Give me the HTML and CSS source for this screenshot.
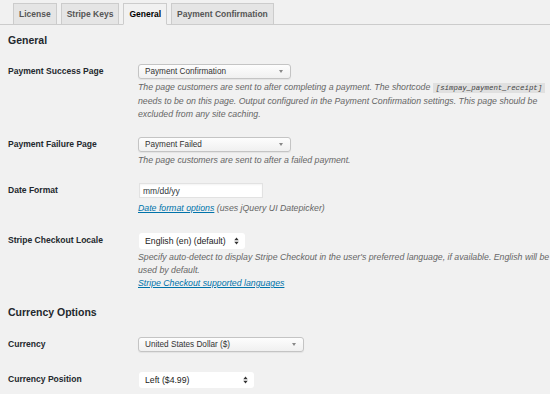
FILE: index.html
```html
<!DOCTYPE html>
<html lang="en">
<head>
    <meta charset="UTF-8">
    <meta name="viewport" content="width=device-width, initial-scale=1.0">
    <title>Settings - General</title>
    <link rel="stylesheet" href="styles.css">
</head>
<body>
    <div class="wrap">
        <nav class="tabs">
            <a class="tab" href="#">License</a>
            <a class="tab" href="#">Stripe Keys</a>
            <a class="tab tab-active" href="#">General</a>
            <a class="tab" href="#">Payment Confirmation</a>
        </nav>

        <h2 class="section-title">General</h2>

        <div class="form-table">
            <div class="row">
                <div class="label">Payment Success Page</div>
                <div class="field">
                    <div class="fancy-select w-page">
                        <span>Payment Confirmation</span>
                        <span class="caret"></span>
                    </div>
                    <p class="desc">The page customers are sent to after completing a payment. The shortcode <code>[simpay_payment_receipt]</code> needs to be on this page. Output configured in the Payment Confirmation settings. This page should be excluded from any site caching.</p>
                </div>
            </div>

            <div class="row">
                <div class="label">Payment Failure Page</div>
                <div class="field">
                    <div class="fancy-select w-page">
                        <span>Payment Failed</span>
                        <span class="caret"></span>
                    </div>
                    <p class="desc">The page customers are sent to after a failed payment.</p>
                </div>
            </div>

            <div class="row">
                <div class="label">Date Format</div>
                <div class="field">
                    <input class="text-input" type="text" value="mm/dd/yy">
                    <p class="desc desc-link"><a href="#">Date format options</a> (uses jQuery UI Datepicker)</p>
                </div>
            </div>

            <div class="row row-native">
                <div class="label">Stripe Checkout Locale</div>
                <div class="field">
                    <div class="native-select w-locale">
                        <span>English (en) (default)</span>
                        <svg class="updown" width="5" height="8" viewBox="0 0 5 8"><path d="M0.3 3.3 L2.5 0.4 L4.7 3.3Z M0.3 4.7 L2.5 7.6 L4.7 4.7Z" fill="#333"/></svg>
                    </div>
                    <p class="desc">Specify auto-detect to display Stripe Checkout in the user's preferred language, if available. English will be used by default.<br><a href="#">Stripe Checkout supported languages</a></p>
                </div>
            </div>
        </div>

        <h2 class="section-title section-gap">Currency Options</h2>

        <div class="form-table">
            <div class="row">
                <div class="label">Currency</div>
                <div class="field">
                    <div class="fancy-select w-currency">
                        <span>United States Dollar ($)</span>
                        <span class="caret"></span>
                    </div>
                </div>
            </div>

            <div class="row row-native row-last">
                <div class="label">Currency Position</div>
                <div class="field">
                    <div class="native-select w-position">
                        <span>Left ($4.99)</span>
                        <svg class="updown" width="5" height="8" viewBox="0 0 5 8"><path d="M0.3 3.3 L2.5 0.4 L4.7 3.3Z M0.3 4.7 L2.5 7.6 L4.7 4.7Z" fill="#333"/></svg>
                    </div>
                </div>
            </div>
        </div>
    </div>
</body>
</html>
```

FILE: styles.css
```css
html, body {
    margin: 0;
    overflow: hidden;
    background-color: #f1f1f1;
}
body {
    font-family: "Liberation Sans", Arial, sans-serif;
    font-size: 8.55px;
    color: #23282d;
}
.wrap {
    padding: 3px 0 0 8px;
}
.tabs {
    display: flex;
    align-items: flex-end;
    gap: 4px;
    margin-left: -8px;
    padding-left: 13px;
    border-bottom: 1px solid #ccc;
}
.tab {
    display: block;
    height: 20px;
    line-height: 20px;
    padding: 0 5px;
    font-size: 8.5px;
    font-weight: bold;
    color: #555;
    text-decoration: none;
    background-color: #e5e5e5;
    border: 1px solid #ccc;
    border-bottom: none;
}
.tab-active {
    color: #000;
    background-color: #f1f1f1;
    border-bottom: 1px solid #f1f1f1;
    margin-bottom: -1px;
}
.section-title {
    margin: 8px 0 9px;
    font-size: 10.5px;
    line-height: 14px;
    color: #23282d;
}
.section-gap {
    margin: 7px 0 10px;
}
.row {
    display: grid;
    grid-template-columns: 130px 425px;
    padding: 8px 0;
}
.row-last {
    padding-top: 10px;
}
.label {
    font-weight: bold;
    line-height: 15px;
}
.row-native .label {
    padding-top: 2px;
}
.fancy-select {
    display: flex;
    align-items: center;
    justify-content: space-between;
    box-sizing: border-box;
    height: 15px;
    padding: 0 7px 0 6px;
    font-size: 8.2px;
    color: #333;
    background: linear-gradient(#fdfdfd, #f0f0f0);
    border: 1px solid #c4c4c4;
    border-radius: 3px;
    box-shadow: 0 1px 1px rgba(0, 0, 0, 0.06);
}
.caret {
    width: 0;
    height: 0;
    border-left: 2px solid transparent;
    border-right: 2px solid transparent;
    border-top: 3px solid #888;
}
.w-page { width: 153px; }
.w-currency { width: 166px; }
.w-locale { width: 106px; }
.w-position { width: 115px; }
.native-select {
    display: flex;
    align-items: center;
    justify-content: space-between;
    box-sizing: border-box;
    height: 16px;
    margin: 2px 0 0 1px;
    padding: 0 6px 0 6px;
    font-size: 8.7px;
    color: #222;
    background-color: #fff;
    border-radius: 3px;
}
.text-input {
    display: block;
    box-sizing: border-box;
    width: 124px;
    height: 15px;
    margin: 0 0 0 1px;
    padding: 0 3px;
    font-family: "Liberation Sans", Arial, sans-serif;
    font-size: 8.5px;
    color: #32373c;
    background-color: #fff;
    border: 1px solid #e2e2e2;
    box-shadow: inset 0 1px 2px rgba(0, 0, 0, 0.05);
    outline: none;
}
.desc {
    margin: 2px 0 0;
    font-size: 8.75px;
    font-style: italic;
    line-height: 13px;
    color: #666;
}
.desc-link {
    margin-top: 4px;
}
.row-native .desc {
    margin-top: 2px;
}
.desc a {
    color: #0073aa;
    text-decoration: underline;
}
code {
    font-family: "Liberation Mono", monospace;
    font-size: 7.4px;
    padding: 1px 3px;
    background-color: rgba(0, 0, 0, 0.07);
    color: #444;
}
```
